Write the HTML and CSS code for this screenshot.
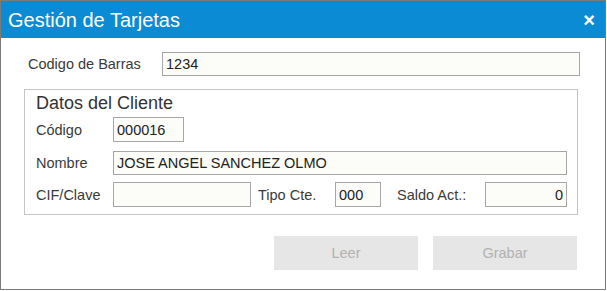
FILE: index.html
```html
<!DOCTYPE html>
<html lang="es">
<head>
    <meta charset="UTF-8">
    <title>Gestión de Tarjetas</title>
    <link rel="stylesheet" href="styles.css">
</head>
<body>

<div class="dialog">
    <div class="titlebar">
        <span class="title">Gestión de Tarjetas</span>
        <span class="close">&times;</span>
    </div>

    <div class="content">
        <div class="row barcode-row">
            <label class="barcode-label">Codigo de Barras</label>
            <input type="text" class="field barcode" value="1234">
        </div>

        <div class="client-box">
            <div class="box-title">Datos del Cliente</div>

            <div class="row code-row">
                <label class="client-label">Código</label>
                <input type="text" class="field code" value="000016">
            </div>

            <div class="row name-row">
                <label class="client-label">Nombre</label>
                <input type="text" class="field name" value="JOSE ANGEL SANCHEZ OLMO">
            </div>

            <div class="row cif-row">
                <label class="client-label">CIF/Clave</label>
                <input type="text" class="field cif" value="">
                <label class="tipo-label">Tipo Cte.</label>
                <input type="text" class="field tipo" value="000">
                <label class="saldo-label">Saldo Act.:</label>
                <input type="text" class="field saldo" value="0">
            </div>
        </div>

        <div class="buttons">
            <button disabled>Leer</button>
            <button disabled>Grabar</button>
        </div>
    </div>
</div>

</body>
</html>
```

FILE: styles.css
```css
body {
    margin: 0;
    font-family: "Liberation Sans", Arial, sans-serif;
    background-color: #fff;
}

.dialog {
    box-sizing: border-box;
    width: 606px;
    height: 290px;
    border: 1px solid #7b7b7b;
    background-color: #fff;
}

.titlebar {
    height: 37px;
    background-color: #0a8bd3;
    color: #fff;
    display: flex;
    align-items: center;
    justify-content: space-between;
    padding: 0 10px 0 7px;
}

.title {
    font-size: 20px;
    margin-top: 1px;
}

.close {
    font-size: 20px;
    font-weight: bold;
    line-height: 1;
}

.content {
    padding: 14px 0 0 23px;
}

.row {
    display: flex;
    align-items: center;
    font-size: 14.5px;
    color: #3a3a3a;
}

.field {
    box-sizing: border-box;
    height: 25px;
    border: 1px solid #a7a7a7;
    background-color: #fcfcf8;
    font-family: "Liberation Sans", Arial, sans-serif;
    font-size: 14.5px;
    color: #222;
    padding: 0 3px;
    margin: 0;
    outline: none;
}

.barcode-label {
    width: 134px;
    padding-left: 4px;
}

.barcode {
    width: 418px;
    height: 24px;
}

/* Datos del Cliente */
.client-box {
    box-sizing: border-box;
    width: 554px;
    margin-top: 13px;
    border: 1px solid #c4c4c4;
    padding: 1px 0 7px 11px;
}

.box-title {
    font-size: 18px;
    color: #333;
    line-height: 24px;
}

.client-label {
    width: 77px;
}

.code-row {
    margin-top: 2px;
}

.code {
    width: 71px;
}

.name-row {
    margin-top: 9px;
}

.name {
    width: 454px;
    height: 24px;
}

.cif-row {
    margin-top: 7px;
}

.cif {
    width: 138px;
}

.tipo-label {
    margin-left: 7px;
    width: 77px;
}

.tipo {
    width: 46px;
}

.saldo-label {
    margin-left: 16px;
    width: 88px;
}

.saldo {
    width: 82px;
    text-align: right;
}

.buttons {
    display: flex;
    gap: 15px;
    width: 553px;
    margin-top: 21px;
    justify-content: flex-end;
}

button {
    width: 144px;
    height: 34px;
    border: none;
    background-color: #e6e6e6;
    color: #b2b2b2;
    font-family: "Liberation Sans", Arial, sans-serif;
    font-size: 14.5px;
}
```
